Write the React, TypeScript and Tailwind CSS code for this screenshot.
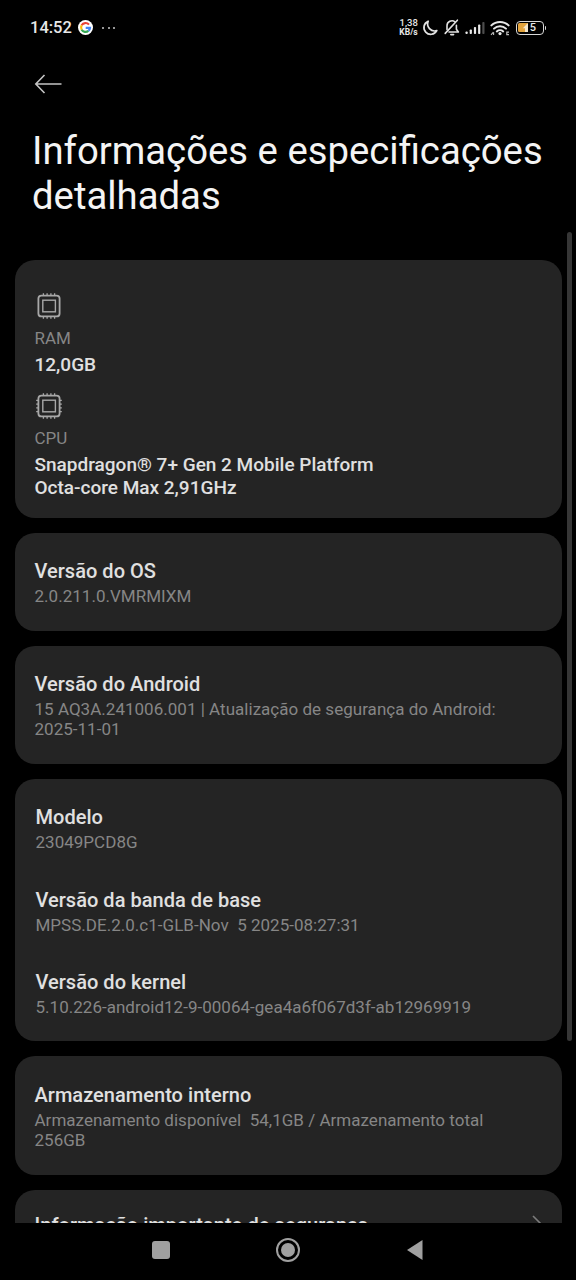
import React from "react";

function GoogleIcon() {
  return (
    <svg width="15" height="15" viewBox="0 0 30 30">
      <circle cx="15" cy="15" r="15" fill="#fff" />
      <g fill="none" strokeWidth="4.4">
        <path d="M22 9.2A9 9 0 0 0 7.3 10.6" stroke="#ea4335" />
        <path d="M7.3 10.6A9 9 0 0 0 7.3 19.4" stroke="#fbbc05" />
        <path d="M7.3 19.4A9 9 0 0 0 20.8 21.8" stroke="#34a853" />
        <path d="M20.8 21.8A9 9 0 0 0 24 15.6H15.4" stroke="#4285f4" />
      </g>
    </svg>
  );
}

function MoonIcon() {
  return (
    <svg width="16" height="16" viewBox="0 0 16 16" fill="none">
      <path
        d="M6.2 1.2A6.8 6.8 0 1 0 14.8 10.6A7 7 0 0 1 6.2 1.2Z"
        stroke="#e2e2e2"
        strokeWidth="1.7"
        strokeLinejoin="round"
      />
    </svg>
  );
}

function BellOffIcon() {
  return (
    <svg width="16" height="17" viewBox="0 0 16 17" fill="none">
      <g stroke="#e2e2e2" strokeWidth="1.6" strokeLinecap="round">
        <path d="M3 10.6V6.8A5 5 0 0 1 11 2.8" />
        <path d="M12.4 6.2V10.2L14.4 13H5" strokeLinejoin="round" />
        <path d="M13.4 1.2L1.2 14.4" />
        <path d="M6.8 15.6H9.6" />
      </g>
    </svg>
  );
}

function SignalIcon() {
  return (
    <svg width="20" height="14" viewBox="0 0 20 14" fill="#e8e8e8">
      <rect x="0.5" y="10.4" width="2.2" height="2.6" rx="0.8" />
      <rect x="4.7" y="8.4" width="2.2" height="4.6" rx="0.8" />
      <rect x="8.9" y="6" width="2.2" height="7" rx="0.8" />
      <rect x="13.1" y="3.4" width="2.2" height="9.6" rx="0.8" />
      <rect x="17.3" y="1" width="2.2" height="12" rx="0.8" fill="#4d4d4d" />
    </svg>
  );
}

function WifiIcon() {
  return (
    <svg width="20" height="16" viewBox="0 0 20 16" fill="none">
      <g stroke="#e8e8e8" strokeWidth="2" strokeLinecap="round">
        <path d="M1.4 5.4A12.4 12.4 0 0 1 18.6 5.4" />
        <path d="M4 8.6A8.6 8.6 0 0 1 16 8.6" />
        <path d="M6.8 11.4A4.8 4.8 0 0 1 13.2 11.4" />
      </g>
      <circle cx="10" cy="13.6" r="1.6" fill="#e8e8e8" />
      <path d="M1 14.8L3.4 12.2M3.6 15V12.2" stroke="#bdbdbd" strokeWidth="1.1" />
      <path d="M19 12.2H16.8V14.6H19" stroke="#bdbdbd" strokeWidth="1.2" />
    </svg>
  );
}

function BatteryIcon() {
  return (
    <div className="flex items-center">
      <div className="flex h-[14px] w-[28px] items-center rounded-[4px] border-[1.5px] border-[#d8d8d8] p-[1.5px]">
        <svg className="h-full w-[10px] shrink-0" viewBox="0 0 10 9">
          <path d="M1.5 0H10V9H1.5A1.5 1.5 0 0 1 0 7.5V1.5A1.5 1.5 0 0 1 1.5 0Z" fill="#e2a33c" />
          <path d="M9.2 0.8L4.8 5.2H7V9H10V0.8Z" fill="#f4e6cc" />
        </svg>
        <span className="-ml-[3px] flex-1 text-center text-[11px] leading-[10px] font-medium">
          5
        </span>
      </div>
      <div className="ml-[1px] h-[4px] w-[1.5px] rounded-r bg-[#d8d8d8]" />
    </div>
  );
}

function ChipIcon({ sidePins }: { sidePins?: boolean }) {
  return (
    <svg width="28" height="28" viewBox="0 0 28 28" fill="none" stroke="#a8a8a8">
      <rect x="3.4" y="3.6" width="21.2" height="20.8" rx="3" strokeWidth="1.8" />
      <rect x="7.8" y="8.2" width="12.6" height="11.6" strokeWidth="1.4" />
      <path
        d="M8.4 1.2V3.6M12.1 1.2V3.6M15.9 1.2V3.6M19.6 1.2V3.6M8.4 24.4V26.8M12.1 24.4V26.8M15.9 24.4V26.8M19.6 24.4V26.8"
        strokeWidth="1.3"
      />
      {sidePins && (
        <path
          d="M1.2 8.4H3.6M1.2 12.1H3.6M1.2 15.9H3.6M1.2 19.6H3.6M24.4 8.4H26.8M24.4 12.1H26.8M24.4 15.9H26.8M24.4 19.6H26.8"
          strokeWidth="1.3"
        />
      )}
    </svg>
  );
}

function Card({
  className,
  children,
}: {
  className: string;
  children: React.ReactNode;
}) {
  return (
    <section className={`w-full shrink-0 rounded-[20px] bg-[#242424] ${className}`}>
      {children}
    </section>
  );
}

function InfoItem({ title, lines }: { title: string; lines: string[] }) {
  return (
    <div>
      <h2 className="text-[20px] leading-[26px] font-medium tracking-[0.03px] text-[#e0e0e0]">
        {title}
      </h2>
      <div className="pt-[2px]">
        {lines.map((line) => (
          <p
            key={line}
            className="text-[17px] leading-[20.5px] tracking-[0.02px] whitespace-pre text-[#868686]"
          >
            {line}
          </p>
        ))}
      </div>
    </div>
  );
}

function StatusBar() {
  return (
    <div className="flex h-[55px] items-center justify-between pr-[30px] pl-[30px] text-[#e8e8e8]">
      <div className="flex items-center">
        <span className="w-[48px] text-[16.5px] leading-5 font-medium">14:52</span>
        <GoogleIcon />
        <div className="ml-[9px] flex gap-[3.5px]">
          <i className="size-[2px] rounded-full bg-[#c8c8c8]" />
          <i className="size-[2px] rounded-full bg-[#c8c8c8]" />
          <i className="size-[2px] rounded-full bg-[#c8c8c8]" />
        </div>
      </div>
      <div className="flex items-center">
        <div className="mr-[4px] w-[18px] text-center text-[9.5px] leading-[8.5px] font-medium whitespace-nowrap">
          <p>1,38</p>
          <p className="-mx-1 text-[8.5px] font-bold">KB/s</p>
        </div>
        <MoonIcon />
        <div className="ml-[6px] flex items-center">
          <BellOffIcon />
        </div>
        <div className="ml-[5px]">
          <SignalIcon />
        </div>
        <div className="mr-[6px] ml-[5px]">
          <WifiIcon />
        </div>
        <BatteryIcon />
      </div>
    </div>
  );
}

function NavBar() {
  return (
    <nav className="grid h-[57px] grid-cols-[322px_1fr] bg-black pb-[3px]">
      <div className="flex items-center">
        <div className="ml-[152px] size-[18px] rounded-[3px] bg-[#a0a0a0]" />
        <div className="ml-[106px] flex size-[24px] items-center justify-center rounded-full border-2 border-[#a0a0a0]">
          <div className="size-[14px] rounded-full bg-[#a0a0a0]" />
        </div>
      </div>
      <div className="flex items-center pl-[84px]">
        <svg width="18" height="22" viewBox="0 0 18 22">
          <path d="M1 11L16.5 1V21Z" fill="#a0a0a0" />
        </svg>
      </div>
    </nav>
  );
}

export default function App() {
  return (
    <div className="relative flex h-[1280px] w-[576px] flex-col overflow-hidden bg-black font-['Roboto',sans-serif]">
      <StatusBar />

      <header className="h-[205px] shrink-0">
        <svg className="mt-[19px] ml-[34px]" width="29" height="20" viewBox="0 0 29 20" fill="none">
          <path
            d="M10.5 1L1.8 10L10.5 19M1.8 10H27.5"
            stroke="#c4c4c4"
            strokeWidth="1.6"
          />
        </svg>
        <h1 className="mt-[34px] pl-[32px] text-[38.3px] leading-[45px] whitespace-nowrap text-[#f4f4f4]">
          Informações e especificações
          <br />
          detalhadas
        </h1>
      </header>

      <main className="flex min-h-0 flex-1 flex-col gap-[15px] overflow-hidden pr-[14px] pl-[15px]">
        <Card className="h-[257.5px] pt-[32px] pl-[19.5px]">
          <ChipIcon />
          <p className="mt-[8px] text-[17px] leading-[20px] text-[#868686]">RAM</p>
          <p className="mt-[5px] text-[19px] leading-[23px] font-medium text-[#e0e0e0]">
            12,0GB
          </p>
          <div className="mt-[16px]">
            <ChipIcon sidePins />
          </div>
          <p className="mt-[8px] text-[17px] leading-[20px] text-[#868686]">CPU</p>
          <p className="mt-[6px] text-[19px] leading-[22.5px] font-medium text-[#e0e0e0]">
            Snapdragon® 7+ Gen 2 Mobile Platform
            <br />
            Octa-core Max 2,91GHz
          </p>
        </Card>

        <Card className="h-[98px] pt-[25px] pl-[19.5px]">
          <InfoItem title="Versão do OS" lines={["2.0.211.0.VMRMIXM"]} />
        </Card>

        <Card className="h-[118.5px] pt-[25.25px] pl-[19.5px]">
          <InfoItem
            title="Versão do Android"
            lines={[
              "15 AQ3A.241006.001 | Atualização de segurança do Android:",
              "2025-11-01",
            ]}
          />
        </Card>

        <Card className="flex h-[262px] flex-col gap-[33.75px] pt-[25.25px] pl-[20.5px]">
          <InfoItem title="Modelo" lines={["23049PCD8G"]} />
          <InfoItem
            title="Versão da banda de base"
            lines={["MPSS.DE.2.0.c1-GLB-Nov  5 2025-08:27:31"]}
          />
          <InfoItem
            title="Versão do kernel"
            lines={["5.10.226-android12-9-00064-gea4a6f067d3f-ab12969919"]}
          />
        </Card>

        <Card className="h-[119px] pt-[25.5px] pl-[19.5px]">
          <InfoItem
            title="Armazenamento interno"
            lines={["Armazenamento disponível  54,1GB / Armazenamento total", "256GB"]}
          />
        </Card>

        <Card className="flex h-[98px] items-start justify-between pt-[22px] pr-[18px] pl-[19.5px]">
          <h2 className="text-[20px] leading-[26px] font-medium tracking-[0.06px] text-[#e0e0e0]">
            Informação importante de segurança
          </h2>
          <svg className="mt-[3px]" width="12" height="20" viewBox="0 0 12 20" fill="none">
            <path d="M1 1L10 10L1 19" stroke="#7c7c7c" strokeWidth="1.6" />
          </svg>
        </Card>
      </main>

      <NavBar />

      {/* scroll indicator */}
      <div className="absolute top-[232px] right-[4px] h-[809px] w-[5px] rounded-full bg-[#363636]" />
    </div>
  );
}
